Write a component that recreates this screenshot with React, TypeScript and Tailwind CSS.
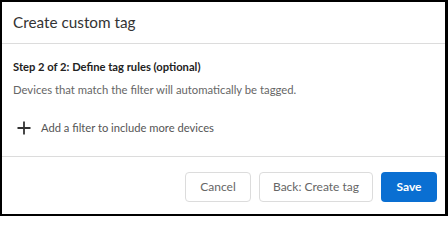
export default function App() {
  return (
    <div
      className="w-[448px] h-[216px] bg-white border-black border-t-2 border-l-2 border-r-[3px] border-b-[2px] flex flex-col text-[#333]"
      style={{ fontFamily: 'Lato, "Open Sans", sans-serif' }}
    >
      {/* Header */}
      <div className="h-[42px] flex items-center px-[11px] border-b border-[#dcdcdc] shrink-0">
        <h2 className="text-[15.3px] text-[#333]">Create custom tag</h2>
      </div>

      {/* Body */}
      <div className="flex-1 px-[11px] pt-[14px]">
        <p className="text-[11.2px] font-bold text-[#222] leading-[18px]">Step 2 of 2: Define tag rules (optional)</p>
        <p className="text-[11.3px] text-[#666] leading-[18px] mt-[5px]">Devices that match the filter will automatically be tagged.</p>
        <button className="flex items-center gap-[10px] mt-[21px] pl-[4px] text-[11.2px] text-[#555]">
          <svg width="14" height="14" viewBox="0 0 14 14" className="text-[#333]">
            <path d="M7 0.5V13.5M0.5 7H13.5" stroke="currentColor" strokeWidth="1.8" />
          </svg>
          <span>Add a filter to include more devices</span>
        </button>
      </div>

      {/* Footer */}
      <div className="h-[58px] border-t border-[#dcdcdc] flex items-start justify-end gap-2 pt-[15px] pr-[8px] shrink-0">
        <button className="h-[30px] w-[66px] rounded border border-[#dcdcdc] text-[12px] text-[#666]">Cancel</button>
        <button className="h-[30px] w-[114px] rounded border border-[#dcdcdc] text-[12px] text-[#666]">Back: Create tag</button>
        <button className="h-[30px] w-[56px] rounded bg-[#0a6fd2] text-[12px] font-bold text-white">Save</button>
      </div>
    </div>
  );
}
